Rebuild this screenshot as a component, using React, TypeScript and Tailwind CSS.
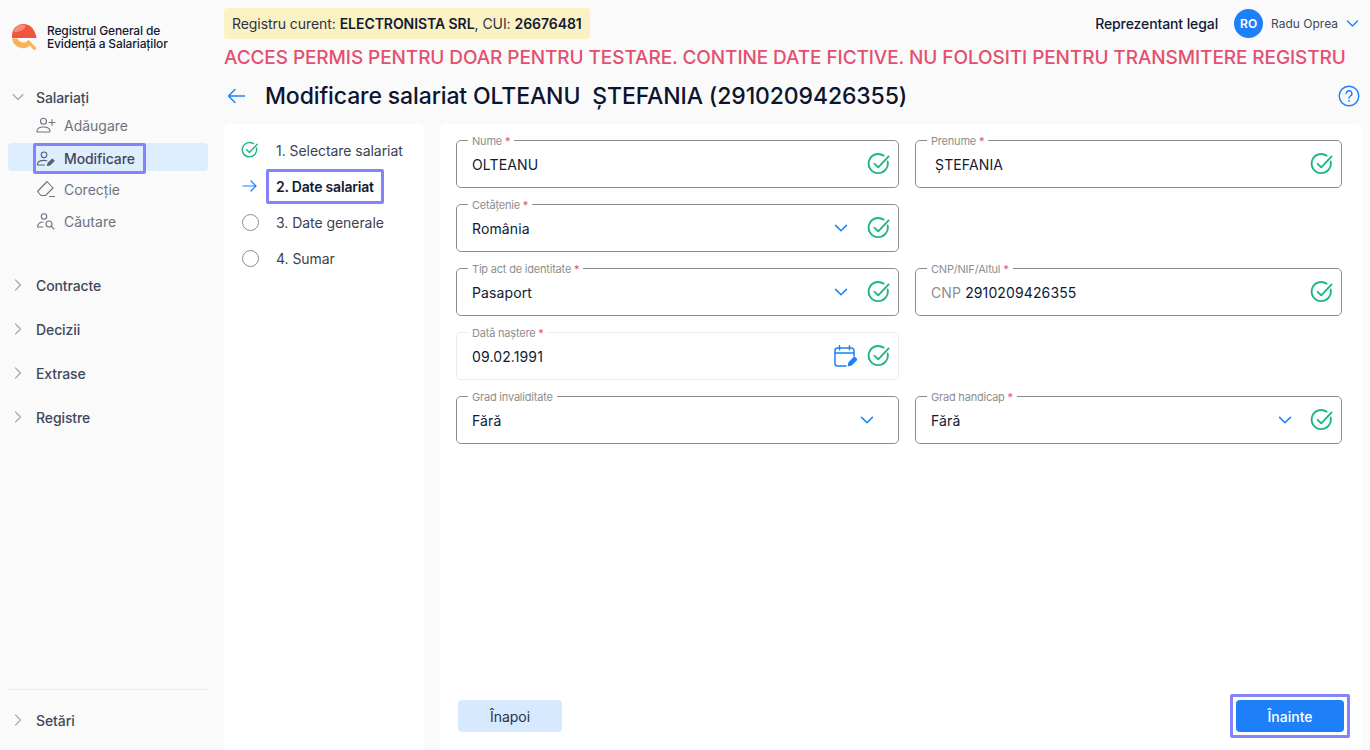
import type { ReactNode } from "react";

const BLUE = "#1d80f9";

function Check({ size = 24 }: { size?: number }) {
  return (
    <svg width={size} height={size} viewBox="0 0 24 24" fill="none" stroke="#22b67f" strokeWidth="1.9" strokeLinecap="round" strokeLinejoin="round">
      <path d="M20.6 9.4A9.6 9.6 0 1 1 16.6 3.6" />
      <path d="M7.6 11.8l3.6 3.6L21.6 4.4" />
    </svg>
  );
}

function Chevron() {
  return (
    <svg width="14" height="14" viewBox="0 0 14 14" fill="none" stroke={BLUE} strokeWidth="1.5" strokeLinecap="round" strokeLinejoin="round">
      <path d="M1.6 4.4L7 9.8l5.4-5.4" />
    </svg>
  );
}

function SideChevron({ open }: { open?: boolean }) {
  return (
    <svg width="12" height="12" viewBox="0 0 12 12" fill="none" stroke="#a3a6ad" strokeWidth="1.1" strokeLinecap="round" strokeLinejoin="round">
      {open ? <path d="M1 3.5L6 8.5l5-5" /> : <path d="M3.5 1L8.5 6l-5 5" />}
    </svg>
  );
}

function Calendar() {
  return (
    <svg width="24" height="24" viewBox="0 0 24 24" fill="none" stroke={BLUE} strokeWidth="1.5" strokeLinecap="round" strokeLinejoin="round">
      <path d="M13 22H4.5A2.5 2.5 0 0 1 2 19.5V6.5A2.5 2.5 0 0 1 4.5 4h14A2.5 2.5 0 0 1 21 6.5V12" />
      <path d="M2 9h19M6.5 1.8v4M16.5 1.8v4" />
      <path d="M15.5 21.5l.7-3 5.2-5.2 2.2 2.2-5.2 5.2z" fill={BLUE} />
    </svg>
  );
}

function Logo() {
  return (
    <svg width="26" height="26" viewBox="0 0 26 26" fill="none">
      <path d="M0 14.5a11 11 0 0 0 19 6l-3.600-3.200A6.500 6.500 0 0 1 5.500 14.500z" fill="#f9b25b" />
      <path d="M16.500 18l6 6.400" stroke="#f9b25b" strokeWidth="3.200" strokeLinecap="round" />
      <path d="M0 14V11.500A11.500 11.500 0 0 1 11.500 0C18 0 23 4.800 24.600 14z" fill="#f0563d" />
      <path d="M1.500 7.500A10 10 0 0 1 11 .8c2 0 3 1.300 2 3-1 1.800-4 3.200-7 4-2 .5-4.800.8-4.500-.3z" fill="#f98a76" />
    </svg>
  );
}

function PersonAdd() {
  return (
    <svg width="20" height="16" viewBox="0 0 20 16" fill="none" stroke="#6e7381" strokeWidth="1.1" strokeLinecap="round" strokeLinejoin="round">
      <circle cx="7.5" cy="4.2" r="3" />
      <path d="M1 14.2c0-3 2.500-4.200 6.500-4.200s6.500 1.200 6.500 4.200c0 .5-.3.8-.8.8H1.800c-.5 0-.8-.3-.8-.8z" />
      <path d="M16 2.500v6M13 5.500h6" />
    </svg>
  );
}

function PersonEdit() {
  return (
    <svg width="20" height="16" viewBox="0 0 20 16" fill="none" stroke="#5a6070" strokeWidth="1.1" strokeLinecap="round" strokeLinejoin="round">
      <circle cx="8" cy="3.8" r="2.8" />
      <path d="M8.500 14H2.200c-.6 0-1-.5-.8-1.100C2 10.600 4.500 9.400 8 9.400c1 0 2 .1 2.800.4" />
      <path d="M11.500 14.500l.6-2.300 4.200-4 1.800 1.700-4.200 4z" fill="#5a6070" />
    </svg>
  );
}

function Eraser() {
  return (
    <svg width="20" height="18" viewBox="0 0 20 18" fill="none" stroke="#6e7381" strokeWidth="1.1" strokeLinecap="round" strokeLinejoin="round">
      <path d="M1.500 11.500L11 1.500l6 6.500-7.500 7.500H5z" />
      <path d="M13.500 16.500h5" />
    </svg>
  );
}

function PersonSearch() {
  return (
    <svg width="20" height="17" viewBox="0 0 20 17" fill="none" stroke="#6e7381" strokeWidth="1.1" strokeLinecap="round" strokeLinejoin="round">
      <circle cx="8" cy="3.5" r="2.7" />
      <path d="M7 14H1.500c0-3.200 2.500-5 5.500-5" />
      <circle cx="13" cy="11" r="3" />
      <path d="M15.200 13.200l2.800 2.800" />
    </svg>
  );
}

function Field({
  label,
  required,
  children,
  right,
  muted,
}: {
  label: string;
  required?: boolean;
  children: ReactNode;
  right?: ReactNode;
  muted?: boolean;
}) {
  return (
    <fieldset className={`h-[53px] min-w-0 rounded-[5px] border pl-[15px] pr-[7px] ${muted ? "border-[#ececec]" : "border-[#8c8c8c]"}`}>
      <legend className="-ml-[4px] translate-y-[1px] whitespace-nowrap px-[4px] text-[11px] leading-[11px] tracking-[-0.2px] text-[#8e8e8e]">
        {label}
        {required && <span className="text-[#e3506f]"> *</span>}
      </legend>
      <div className="flex h-[36px] items-center justify-between">
        <div className="whitespace-pre text-[14px] tracking-[0.12px] text-[#111a33]">{children}</div>
        <div className="flex items-center gap-[10px]">{right}</div>
      </div>
    </fieldset>
  );
}

function NavSection({ label, open }: { label: string; open?: boolean }) {
  return (
    <div className="flex h-[24px] items-center text-[14px] font-medium tracking-[-0.1px] text-[#41485a]">
      <span className="ml-[12px] w-[24px]">
        <SideChevron open={open} />
      </span>
      {label}
    </div>
  );
}

function NavItem({ icon, label, active }: { icon: ReactNode; label: string; active?: boolean }) {
  return (
    <div className={`flex h-[28px] items-center rounded-[4px] ${active ? "bg-[#dfeeff]" : ""}`}>
      <div
        className={`ml-[25px] flex items-center gap-[8px] text-[14px] ${
          active
            ? "h-[31px] self-start rounded-[2px] border-[3px] border-[#8583fb] pr-[8px] font-medium tracking-[-0.1px] text-[#41485a]"
            : "pl-[3px] text-[#6e7381]"
        }`}
      >
        <span className="flex w-[20px] justify-center">{icon}</span>
        {label}
      </div>
    </div>
  );
}

function StepCircle() {
  return <span className="block h-[17px] w-[17px] rounded-full border-[1.5px] border-[#8c8c8c]" />;
}

export default function App() {
  return (
    <div className="flex h-[750px] w-[1370px] overflow-hidden bg-[#fafafa] font-['Inter',sans-serif] text-[#111a33]">
      <aside className="flex w-[224px] flex-none flex-col pl-[8px] pr-[16px]">
        <div className="mt-[24px] flex items-center gap-[9px] pl-[4px]">
          <Logo />
          <div className="text-[12px] font-medium leading-[13px] tracking-[-0.15px] text-[#111a33]">
            Registrul General de
            <br />
            Evidență a Salariaților
          </div>
        </div>

        <div className="mt-[35px] -ml-[8px]">
          <NavSection label="Salariați" open />
        </div>
        <div className="mt-[2px] flex flex-col gap-[4px]">
          <NavItem icon={<PersonAdd />} label="Adăugare" />
          <NavItem icon={<PersonEdit />} label="Modificare" active />
          <NavItem icon={<Eraser />} label="Corecție" />
          <NavItem icon={<PersonSearch />} label="Căutare" />
        </div>
        <div className="mt-[38px] -ml-[8px] flex flex-col gap-[20px]">
          <NavSection label="Contracte" />
          <NavSection label="Decizii" />
          <NavSection label="Extrase" />
          <NavSection label="Registre" />
        </div>

        <div className="mt-auto border-t border-[#ececec] pt-[18px] pb-[18px]">
          <div className="-ml-[8px]">
            <NavSection label="Setări" />
          </div>
        </div>
      </aside>

      <main className="flex min-w-0 flex-1 flex-col">
        <div className="mt-[8px] flex h-[31px] items-center justify-between pr-[11px]">
          <div className="flex h-[31px] items-center rounded-[4px] bg-[#fbf2c4] px-[8px] text-[14px] tracking-[-0.06px] text-[#2b3247]">
            <span>
              Registru curent: <span className="font-semibold text-[#111a33]">ELECTRONISTA SRL</span>, CUI:{" "}
              <span className="font-semibold text-[#111a33]">26676481</span>
            </span>
          </div>
          <div className="flex items-center">
            <span className="text-[14px] font-medium tracking-[-0.1px]">Reprezentant legal</span>
            <span className="ml-[16px] flex h-[29px] w-[29px] items-center justify-center rounded-full bg-[#1d80f9] text-[12px] font-semibold text-white">
              RO
            </span>
            <span className="ml-[8px] text-[12px] text-[#41485a]">Radu Oprea</span>
            <span className="ml-[8px] flex">
              <svg width="13" height="13" viewBox="0 0 14 14" fill="none" stroke={BLUE} strokeWidth="1.5" strokeLinecap="round" strokeLinejoin="round">
                <path d="M1.6 4.4L7 9.8l5.4-5.4" />
              </svg>
            </span>
          </div>
        </div>

        <div className="mt-[8px] h-[22px] whitespace-nowrap text-[19px] font-medium leading-[22px] tracking-[-0.09px] text-[#e3506f]">
          ACCES PERMIS PENTRU DOAR PENTRU TESTARE. CONTINE DATE FICTIVE. NU FOLOSITI PENTRU TRANSMITERE REGISTRU
        </div>

        <div className="mt-[12px] flex h-[30px] items-center pr-[10px]">
          <svg className="ml-[3px]" width="19" height="16" viewBox="0 0 19 16" fill="none" stroke={BLUE} strokeWidth="1.4" strokeLinecap="round" strokeLinejoin="round">
            <path d="M17.5 8H1.500M8 1.500L1.500 8 8 14.500" />
          </svg>
          <h1 className="ml-[19px] whitespace-pre text-[23px] font-medium tracking-[-0.12px] text-[#0b1530]">
            Modificare salariat OLTEANU  ȘTEFANIA (2910209426355)
          </h1>
          <svg className="ml-auto" width="22" height="22" viewBox="0 0 22 22" fill="none" stroke={BLUE} strokeWidth="1.4" strokeLinecap="round">
            <circle cx="11" cy="11" r="9.8" />
            <path d="M8.300 8.600A2.800 2.800 0 1 1 12.400 11c-1 .6-1.400 1.200-1.400 2.200" />
            <path d="M11 15.800v.1" strokeWidth="1.8" />
          </svg>
        </div>

        <div className="mt-[13px] flex min-h-0 flex-1 gap-[16px] pr-[8px]">
          <section className="w-[200px] flex-none rounded-t-[6px] bg-white pt-[12px]">
            <div className="flex flex-col gap-[8px]">
              <div className="flex h-[28px] items-center text-[14px] tracking-[-0.05px] text-[#3a4155]">
                <span className="ml-[17px] flex w-[35px]"><Check size={18} /></span>
                1. Selectare salariat
              </div>
              <div className="flex h-[28px] items-center text-[14px] font-semibold tracking-[-0.2px] text-[#111a33]">
                <span className="ml-[18px] flex w-[24px]">
                  <svg width="15" height="12" viewBox="0 0 15 12" fill="none" stroke={BLUE} strokeWidth="1.2" strokeLinecap="round" strokeLinejoin="round">
                    <path d="M1 6h13M9 1l5 5-5 5" />
                  </svg>
                </span>
                <span className="flex h-[35px] items-center rounded-[2px] border-[3px] border-[#8583fb] px-[7px]">2. Date salariat</span>
              </div>
              <div className="flex h-[28px] items-center text-[14px] tracking-[-0.05px] text-[#3a4155]">
                <span className="ml-[18px] flex w-[34px]"><StepCircle /></span>
                3. Date generale
              </div>
              <div className="flex h-[28px] items-center text-[14px] tracking-[-0.05px] text-[#3a4155]">
                <span className="ml-[18px] flex w-[34px]"><StepCircle /></span>
                4. Sumar
              </div>
            </div>
          </section>

          <section className="flex min-w-0 flex-1 flex-col rounded-t-[6px] bg-white pt-[11px] pl-[16px] pr-[20px]">
            <div className="grid grid-cols-[443px_427px] gap-x-[16px] gap-y-[11px]">
              <Field label="Nume" required right={<Check />}>OLTEANU</Field>
              <Field label="Prenume" required right={<Check />}> ȘTEFANIA</Field>
              <Field label="Cetățenie" required right={<><span className="mr-[9px] flex"><Chevron /></span><Check /></>}>România</Field>
              <div />
              <Field label="Tip act de identitate" required right={<><span className="mr-[9px] flex"><Chevron /></span><Check /></>}>Pasaport</Field>
              <Field label="CNP/NIF/Altul" required right={<Check />}>
                <span className="text-[#8e8e8e]">CNP </span>2910209426355
              </Field>
              <Field label="Dată naștere" required muted right={<><Calendar /><Check /></>}>09.02.1991</Field>
              <div />
              <Field label="Grad invaliditate" right={<span className="mr-[17px] flex"><Chevron /></span>}>Fără</Field>
              <Field label="Grad handicap" required right={<><span className="mr-[8px] flex"><Chevron /></span><Check /></>}>Fără</Field>
            </div>

            <div className="mt-auto flex items-center justify-between pb-[12px] pl-[2px]">
              <button className="h-[32px] w-[104px] rounded-[4px] bg-[#d6e9ff] text-[14px] text-[#2b3247]">Înapoi</button>
              <div className="-mr-[8px] rounded-[2px] border-[3px] border-[#8583fb] p-[3px]">
                <button className="block h-[32px] w-[108px] rounded-[4px] bg-[#1d80f9] text-[14px] font-medium text-white">
                  Înainte
                </button>
              </div>
            </div>
          </section>
        </div>
      </main>
    </div>
  );
}
